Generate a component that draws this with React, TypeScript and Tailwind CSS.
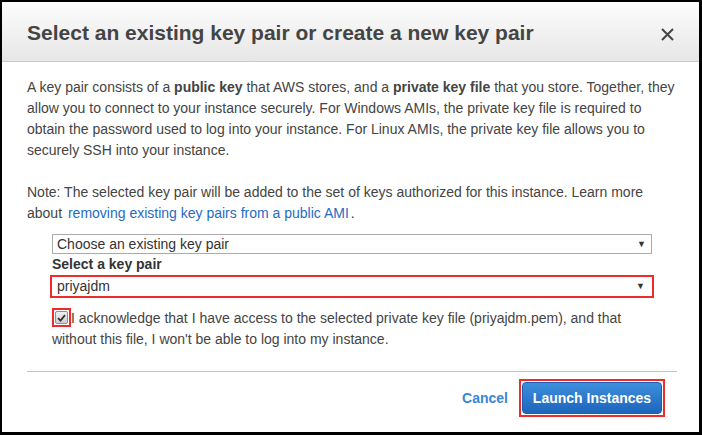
const font = { fontFamily: '"Liberation Sans", Arial, sans-serif' };

const Arrow = () => (
  <span className="text-[9px] text-[#333] leading-none">▼</span>
);

export default function App() {
  return (
    <div
      className="w-[702px] h-[435px] bg-white border-black border-l-2 border-t-2 border-r-[3px] border-b-[3px] flex flex-col text-[#444]"
      style={font}
    >
      <div className="h-[60px] shrink-0 flex items-center justify-between pl-[25px] pr-[25px] pt-[3px] bg-gradient-to-b from-[#fdfdfd] to-[#e6e6e6] border-b border-[#cccccc]">
        <h1 className="text-[21px] font-bold text-[#444]">
          Select an existing key pair or create a new key pair
        </h1>
        <svg width="13" height="13" viewBox="0 0 13 13" className="mt-[2px]">
          <path d="M1 1 L12 12 M12 1 L1 12" stroke="#444" strokeWidth="2" />
        </svg>
      </div>

      <div className="flex-1 flex flex-col pl-[25px] pr-[22px] pt-[15px] text-[14px] leading-[21px]">
        <p>
          A key pair consists of a <b>public key</b> that AWS stores, and a{" "}
          <b>private key file</b> that you store. Together, they allow you to
          connect to your instance securely. For Windows AMIs, the private key
          file is required to obtain the password used to log into your
          instance. For Linux AMIs, the private key file allows you to securely
          SSH into your instance.
        </p>
        <p className="mt-[21px]">
          Note: The selected key pair will be added to the set of keys
          authorized for this instance. Learn more about{" "}
          <a className="text-[#1f6bc4] ml-[2px]">
            removing existing key pairs from a public AMI
          </a>
          <span className="ml-[2px]">.</span>
        </p>

        <div className="ml-[25px] mt-[10px] w-[600px] flex flex-col">
          <div className="h-[20px] border border-[#aaaaaa] flex items-center justify-between pl-[4px] pr-[5px] text-[#333]">
            <span>Choose an existing key pair</span>
            <Arrow />
          </div>
          <div className="font-bold text-[#333] leading-[21px]">
            Select a key pair
          </div>
          <div className="-mx-[2px] h-[23px] border-2 border-[#ee2a2a] flex items-center justify-between pl-[5px] pr-[7px] text-[#333]">
            <span>priyajdm</span>
            <Arrow />
          </div>
        </div>

        <div className="ml-[25px] mt-[10px] w-[600px] leading-[21px]">
          <span className="inline-block overflow-hidden align-[-4px] w-[19px] h-[19px] border-2 border-[#ee2a2a]">
            <span className="flex w-full h-full items-center justify-center">
              <span className="w-[13px] h-[13px] rounded-[2px] border border-[#8f8f8f] bg-gradient-to-b from-[#f0f0f0] to-[#cfcfcf] flex items-center justify-center">
                <svg width="9" height="8" viewBox="0 0 9 8">
                  <path d="M1 4.2 L3.5 6.6 L8 1.2" stroke="#333" strokeWidth="1.8" fill="none" />
                </svg>
              </span>
            </span>
          </span>
          I acknowledge that I have access to the selected private key file
          (priyajdm.pem), and that without this file, I won't be able to log
          into my instance.
        </div>

        <div className="mt-[21px] h-px bg-[#c4c4c4]" />

        <div className="flex items-center justify-end mt-[7px] pr-[12px]">
          <span className="text-[#3a86d6] font-bold mr-[11px]">Cancel</span>
          <div className="border-2 border-[#ee2a2a] p-px">
            <button className="w-[140px] h-[32px] rounded-[4px] border border-[#1c5fae] bg-gradient-to-b from-[#3d8fdc] to-[#1c65bd] text-white font-bold text-[14px]">
              Launch Instances
            </button>
          </div>
        </div>
      </div>
    </div>
  );
}
